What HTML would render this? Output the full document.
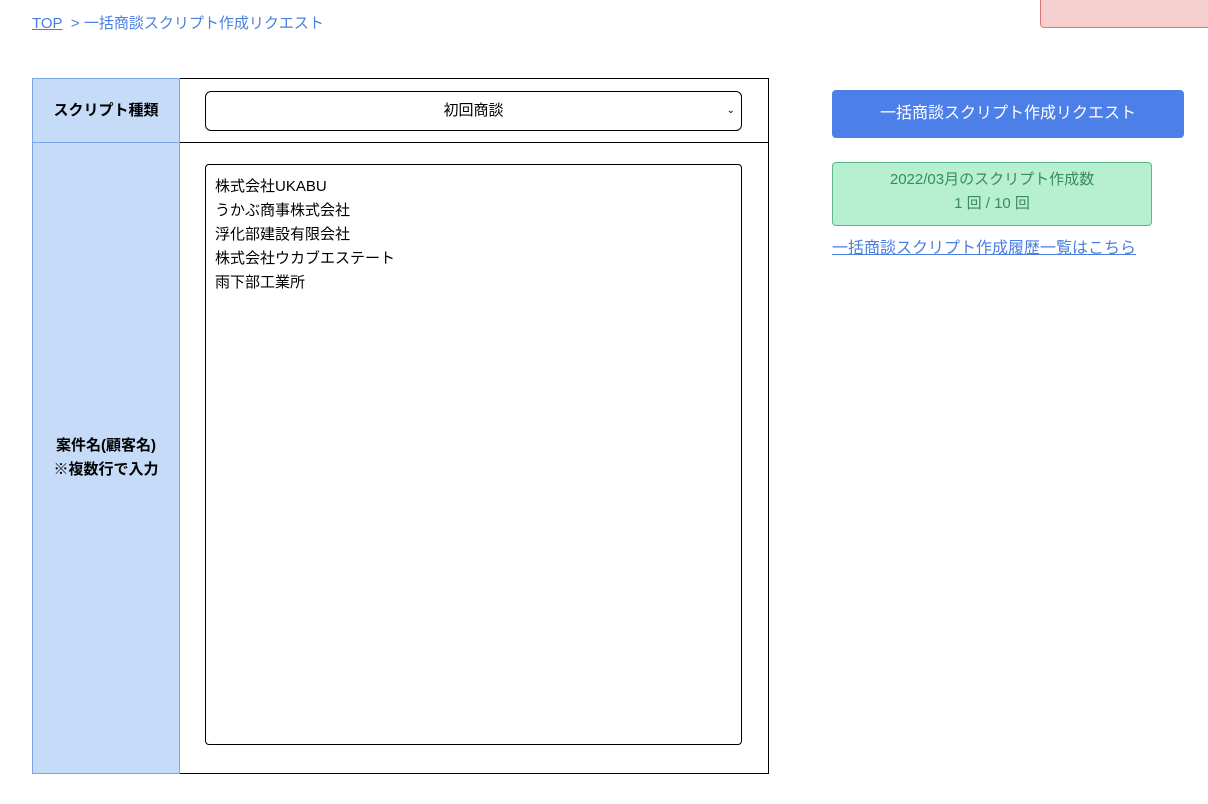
<!DOCTYPE html>
<html><head><meta charset="utf-8"><style>
*{box-sizing:border-box}
body{margin:0;width:1208px;height:804px;background:#fff;font-family:"Liberation Sans","Noto Sans CJK JP",sans-serif;font-size:15px;color:#000;position:relative;overflow:hidden}
.a{position:absolute}
.bc{left:32px;top:12px;color:#4a7fe0;font-size:15px}
.bc u{text-decoration:underline}
.alert{left:1040px;top:-4px;width:180px;height:32px;background:#f6cfcf;border:1px solid #d77;border-radius:4px}
table{position:absolute;left:32px;top:78px;border-collapse:collapse}
td{border:1px solid #000}
th{background:#c5dbf8;border:1px solid #7aa6e6;width:147px;font-weight:bold;font-size:15px;line-height:24px}
.sel{left:205px;top:91px;width:537px;height:40px;border:1px solid #000;border-radius:6px;text-align:center;line-height:38px;font-size:15px}
.ta{left:205px;top:164px;width:537px;height:581px;border:1px solid #000;border-radius:4px;padding:10px 9px;line-height:24px;font-size:15px}
.btn{left:832px;top:90px;width:352px;height:48px;background:#4d7fe8;color:#fff;border-radius:4px;text-align:center;line-height:48px;font-size:16px}
.cnt{left:832px;top:162px;width:320px;height:64px;background:#b7f0d1;border:1px solid #5bb88a;border-radius:4px;color:#3a8a5a;text-align:center;font-size:15px;line-height:24px;padding-top:5px}
.lk{left:832px;top:234px;color:#4a7fe0;text-decoration:underline;font-size:16px}
</style></head><body>
<div class="a bc"><u>TOP</u>&nbsp; &gt; 一括商談スクリプト作成リクエスト</div>
<div class="a alert"></div>
<table>
<tr style="height:64px"><th>スクリプト種類</th><td style="width:589px"></td></tr>
<tr style="height:631px"><th>案件名(顧客名)<br>※複数行で入力</th><td></td></tr>
</table>
<div class="a sel">初回商談<span style="position:absolute;right:6px;font-size:10px">&#8964;</span></div>
<div class="a ta">株式会社UKABU<br>うかぶ商事株式会社<br>浮化部建設有限会社<br>株式会社ウカブエステート<br>雨下部工業所</div>
<div class="a btn">一括商談スクリプト作成リクエスト</div>
<div class="a cnt">2022/03月のスクリプト作成数<br>1 回 / 10 回</div>
<div class="a lk">一括商談スクリプト作成履歴一覧はこちら</div>
</body></html>
